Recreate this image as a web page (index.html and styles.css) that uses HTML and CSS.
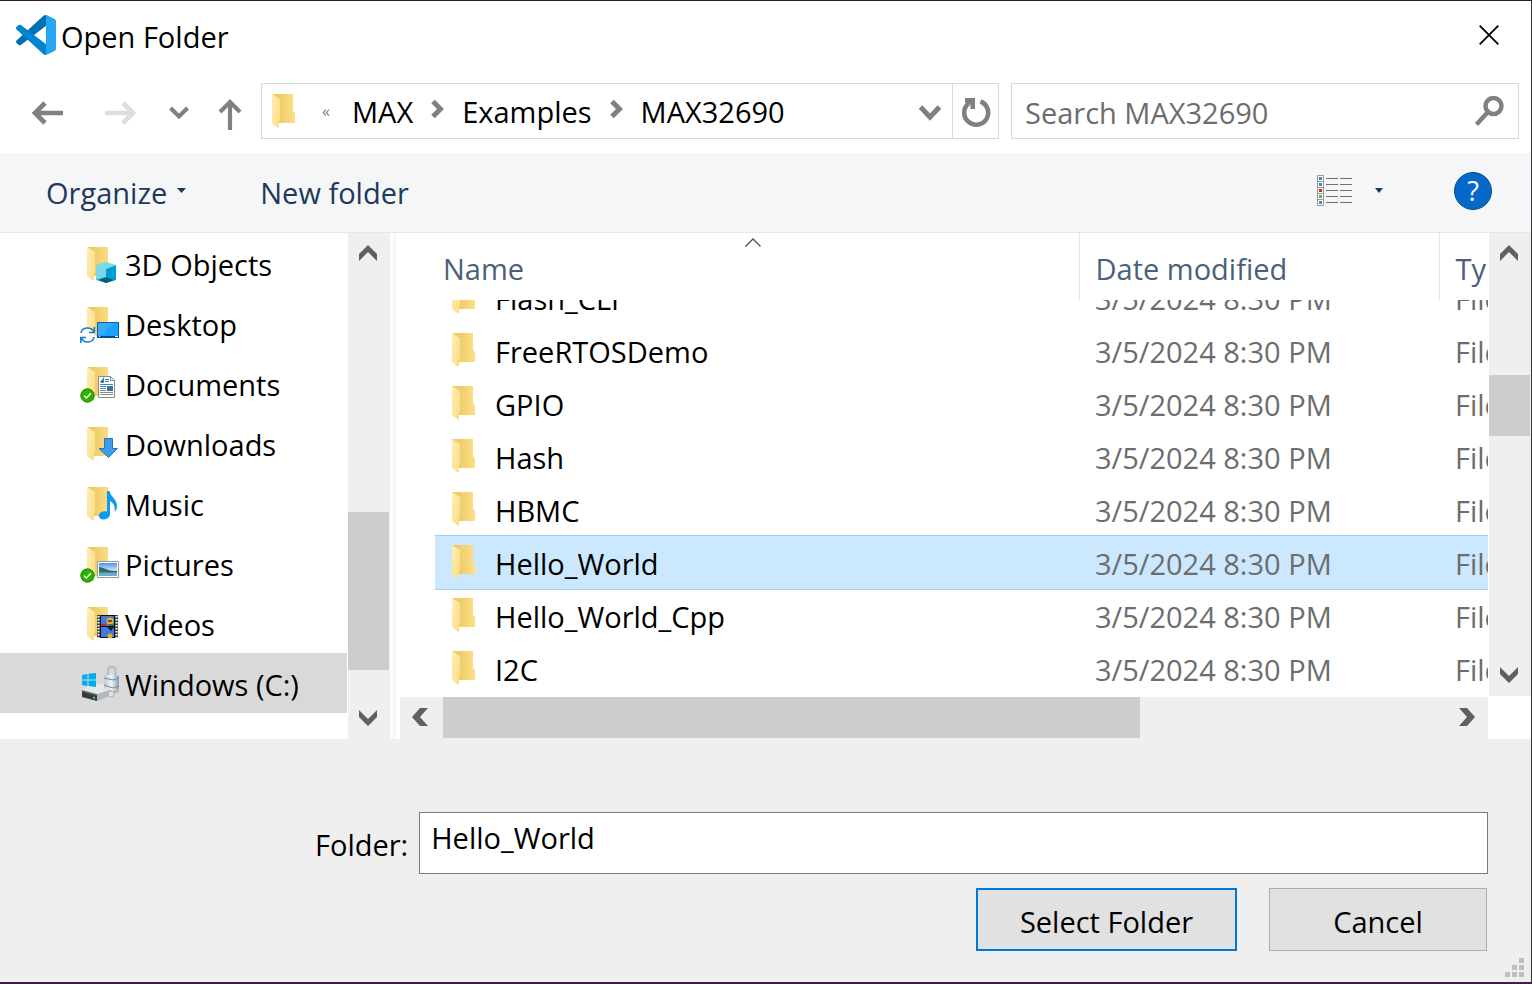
FILE: index.html
```html
<!DOCTYPE html>
<html lang="en">
<head>
<meta charset="utf-8">
<title>Open Folder</title>
<link rel="stylesheet" href="styles.css">
</head>
<body>
<svg class="defs" aria-hidden="true">
  <defs>
    <linearGradient id="back" x1="0" y1="0" x2="1" y2="0"><stop offset=".3" stop-color="#efca69"/><stop offset="1" stop-color="#fde085"/></linearGradient>
    <linearGradient id="flap" x1="0" y1="0" x2="1" y2="1"><stop offset="0" stop-color="#ffeeb5"/><stop offset="1" stop-color="#fbdc83"/></linearGradient>
    <linearGradient id="sky" x1="0" y1="0" x2="0" y2="1"><stop offset="0" stop-color="#4f93ea"/><stop offset="1" stop-color="#e8f4fb"/></linearGradient>
    <linearGradient id="metal" x1="0" y1="0" x2="1" y2="0"><stop offset="0" stop-color="#c3cad0"/><stop offset=".5" stop-color="#eef2f5"/><stop offset="1" stop-color="#8e9aa5"/></linearGradient>
    <symbol id="folder" viewBox="0 0 24 35">
      <path fill="url(#back)" d="M0 0H21V17L23 19V29H6Z"/>
      <path fill="url(#flap)" d="M0 0L8 5V25L7 27V34L5 33L0 29Z"/>
    </symbol>
    <symbol id="check" viewBox="0 0 16 16">
      <circle cx="8" cy="8" r="7.5" fill="#2db200"/><circle cx="8" cy="8" r="7" fill="none" stroke="#189000"/>
      <path fill="none" stroke="#fff" stroke-width="1.6" d="M4.3 8.2L6.8 10.6L11.6 5.6"/>
    </symbol>
    <symbol id="up" viewBox="0 0 18 16"><path fill="#606060" d="M9 0L18 9V16L9 7L0 16V9Z"/></symbol>
    <symbol id="down" viewBox="0 0 18 16"><path fill="#606060" d="M9 16L18 7V0L9 9L0 0V7Z"/></symbol>
    <symbol id="left" viewBox="0 0 16 18"><path fill="#606060" d="M0 9L8 0H16L8 9L16 18H8Z"/></symbol>
    <symbol id="right" viewBox="0 0 16 18"><path fill="#606060" d="M16 9L8 0H0L8 9L0 18H8Z"/></symbol>
    <symbol id="crumb" viewBox="0 0 13 18"><path fill="none" stroke="#808080" stroke-width="5" d="M2 1.5L9.5 9L2 16.5"/></symbol>
  </defs>
</svg>
<div class="dialog" role="dialog" aria-labelledby="dialog-title">
  <header class="titlebar">
    <svg class="logo" width="40" height="40" viewBox="0 0 100 100" aria-hidden="true">
      <path fill="#0070b3" d="M96.4614 10.7962L75.8569 .8755C73.4719-.2728 70.6217.2116 68.75 2.0833L1.2986 63.5832C-.5157 65.2373-.5136 68.0937 1.3031 69.7452L6.8127 74.754C8.2979 76.1042 10.5347 76.2036 12.1338 74.9905L93.3609 13.3699C96.086 11.3026 100 13.2462 100 16.6667V16.4275C100 14.0265 98.6246 11.8378 96.4614 10.7962Z"/>
      <path fill="#0086d1" d="M96.4614 89.2038L75.8569 99.1245C73.4719 100.273 70.6217 99.7884 68.75 97.9167L1.2986 36.4169C-.5157 34.7627-.5136 31.9063 1.3031 30.2548L6.8127 25.246C8.2979 23.8958 10.5347 23.7964 12.1338 25.0095L93.3609 86.6301C96.086 88.6974 100 86.7538 100 83.3334V83.5726C100 85.9735 98.6246 88.1622 96.4614 89.2038Z"/>
      <path fill="#26a5f2" d="M75.8578 99.1263C73.4721 100.274 70.6219 99.7885 68.75 97.9166C71.0564 100.223 75 98.5895 75 95.3278V4.6721C75 1.4104 71.0564-.2231 68.75 2.0833C70.6219.2114 73.4721-.2737 75.8578.8736L96.4587 10.7807C98.6234 11.8217 100 14.0112 100 16.4132V83.5871C100 85.9893 98.6234 88.1787 96.4587 89.2198L75.8578 99.1263Z"/>
    </svg>
    <h1 class="title" id="dialog-title">Open Folder</h1>
    <button class="plain close" type="button" aria-label="Close"><svg width="20" height="20" viewBox="0 0 20 20"><path fill="none" stroke="#000" stroke-width="1.8" d="M.7.7L19.3 19.3M19.3.7L.7 19.3"/></svg></button>
  </header>

  <nav class="navbar" aria-label="Location">
    <div class="history">
      <button class="plain" type="button" aria-label="Back"><svg width="31" height="24" viewBox="0 0 31 24"><path fill="none" stroke="#808080" stroke-width="4.6" d="M31 12H3M13 2L3 12L13 22"/></svg></button>
      <button class="plain forward" type="button" aria-label="Forward"><svg width="31" height="24" viewBox="0 0 31 24"><path fill="none" stroke="#dedede" stroke-width="4.6" d="M0 12H28M18 2L28 12L18 22"/></svg></button>
      <button class="plain recent" type="button" aria-label="Recent locations"><svg width="20" height="14" viewBox="0 0 20 14"><path fill="none" stroke="#808080" stroke-width="4" d="M1.5 2L10 10.5L18.500 2"/></svg></button>
      <button class="plain parent" type="button" aria-label="Up"><svg width="24" height="32" viewBox="0 0 24 32"><path fill="none" stroke="#808080" stroke-width="4.2" d="M12 31V3M2 13L12 3L22 13"/></svg></button>
    </div>
    <div class="address">
      <svg class="address-folder" width="24" height="35" aria-hidden="true"><use href="#folder"/></svg>
      <button class="plain overflow" type="button" aria-label="More folders">«</button>
      <button class="plain crumb" type="button">MAX</button>
      <svg class="crumb-arrow" width="13" height="18" aria-hidden="true"><use href="#crumb"/></svg>
      <button class="plain crumb" type="button">Examples</button>
      <svg class="crumb-arrow" width="13" height="18" aria-hidden="true"><use href="#crumb"/></svg>
      <button class="plain crumb" type="button">MAX32690</button>
      <button class="plain previous" type="button" aria-label="Previous locations"><svg width="22" height="16" viewBox="0 0 22 16"><path fill="none" stroke="#808080" stroke-width="5" d="M1.500 2L11 12L20.500 2"/></svg></button>
      <button class="plain refresh" type="button" aria-label="Refresh"><svg width="30" height="32" viewBox="0 0 30 32"><path fill="none" stroke="#808080" stroke-width="4.600" d="M7.500 7.500A12 12 0 1 0 19.500 5.500"/><path fill="#808080" d="M4 2H14V13H9.500V9L4 6.500Z"/></svg></button>
    </div>
    <div class="search">
      <input class="search-input" type="search" placeholder="Search MAX32690" aria-label="Search MAX32690">
      <svg width="30" height="32" viewBox="0 0 30 32" aria-hidden="true"><circle cx="18.500" cy="11" r="8" fill="none" stroke="#808080" stroke-width="4.500"/><path stroke="#808080" stroke-width="4.500" d="M13 17L1.500 29.500"/></svg>
    </div>
  </nav>

  <div class="toolbar" role="toolbar" aria-label="Folder actions">
    <button class="plain tool organize" type="button">Organize<svg width="10" height="5" viewBox="0 0 10 5" aria-hidden="true"><path fill="#1e395b" d="M0 0H9L4.500 5Z"/></svg></button>
    <button class="plain tool" type="button">New folder</button>
    <button class="plain view" type="button" aria-label="Change your view">
      <svg width="36" height="32" viewBox="0 0 36 32"><g fill="#fff" stroke="#999"><path d="M.5.5H6.500V30.500H.5ZM.5 6.500H6.500M.5 12.500H6.500M.5 18.500H6.500M.5 24.500H6.500"/></g><path stroke="#707070" d="M9 3.500H21M23 3.500H35M9 9.500H21M23 9.500H35M9 15.500H21M23 15.500H35M9 21.500H21M23 21.500H35M9 27.500H21M23 27.500H35"/><path fill="#4b88b8" d="M2 2H5V5H2ZM2 8H5V11H2ZM2 26H5V29H2Z"/><path fill="#d02a10" d="M2 14H5V17H2Z"/><path fill="#7aa06a" d="M2 20H5V23H2Z"/></svg>
      <svg width="8" height="5" viewBox="0 0 8 5"><path fill="#1e395b" d="M0 0H8L4 5Z"/></svg>
    </button>
    <button class="plain help" type="button" aria-label="Get help">?</button>
  </div>

  <main class="browser">
    <ul class="places">
      <li><button class="plain place" type="button"><svg width="40" height="40" viewBox="0 0 40 40" aria-hidden="true"><use href="#folder" x="7" y="4" width="24" height="35"/><path fill="#74dcea" d="M16 22L26 19L36 22L26 26Z"/><path fill="#48c3dc" d="M16 22L26 26V40L16 37Z"/><path fill="#009fd3" d="M36 22L26 26V40L36 37Z"/><path fill="#035e78" d="M18 37L26 34L34 37L26 40Z"/><path fill="#b8f0f5" d="M16 22L26 26V34L16 36Z" opacity=".45"/></svg>3D Objects</button></li>
      <li><button class="plain place" type="button"><svg width="40" height="40" viewBox="0 0 40 40" aria-hidden="true"><use href="#folder" x="7" y="4" width="24" height="35"/><path fill="#1ba1ff" stroke="#0a5fa8" d="M17.500 19.500H38.500V34.500H17.500Z"/><path fill="#52b7ff" d="M18 20H33L22 32H18Z" opacity=".5"/><path stroke="#084f8c" stroke-width="2" d="M17 34H39"/><path stroke="#d9efff" d="M19 33.500H20M35 33.500H38"/><circle cx="7.500" cy="32" r="8" fill="#fff" opacity=".75"/><path fill="none" stroke="#0f7ad6" stroke-width="1.500" d="M1 30C2 24 11 23 14 29M14.300 24V29.500H9M14 34C13 40 4 41 1.500 35M.8 40V34.500H6"/></svg>Desktop</button></li>
      <li><button class="plain place" type="button"><svg width="40" height="40" viewBox="0 0 40 40" aria-hidden="true"><use href="#folder" x="7" y="4" width="24" height="35"/><path fill="#fff" stroke="#8c8c8c" d="M18.500 13.500H30.500L34.500 17.500V34.500H18.500Z"/><path fill="none" stroke="#8c8c8c" d="M30.500 13.500V17.500H34.500"/><path stroke="#2f8bc4" stroke-width="1.200" d="M20.500 19.500L23.500 15.500V19.500M25 16.500H29M25 18.500H29M20 21.500H33M20 23.500H26"/><path stroke="#888" d="M20 25.500H26M20 27.500H26M20 29.500H33M20 31.500H33"/><path fill="#3d729c" d="M27 23H33V28H27Z"/><use href="#check" x="0" y="25" width="15" height="15"/></svg>Documents</button></li>
      <li><button class="plain place" type="button"><svg width="40" height="40" viewBox="0 0 40 40" aria-hidden="true"><use href="#folder" x="7" y="4" width="24" height="35"/><path fill="#3d9bea" stroke="#2474bd" d="M24.500 15.500H32.500V25.500H37.500L28.500 34.500L19 25.500H24.500Z"/></svg>Downloads</button></li>
      <li><button class="plain place" type="button"><svg width="40" height="40" viewBox="0 0 40 40" aria-hidden="true"><use href="#folder" x="7" y="4" width="24" height="35"/><path fill="#0a9bf5" d="M27 8H29.500C30.500 14 37 16 37 23C37 26 36 28 34.500 29C35.500 24 34 20 30 18V31C30 34 27 36.500 23.500 36.500C20.500 36.500 18.500 34.500 19 32C19.500 29.500 23 27.500 27 28.500Z"/></svg>Music</button></li>
      <li><button class="plain place" type="button"><svg width="40" height="40" viewBox="0 0 40 40" aria-hidden="true"><use href="#folder" x="7" y="4" width="24" height="35"/><path fill="#fff" stroke="#999" d="M17.500 18.500H38.500V34.500H17.500Z"/><path fill="url(#sky)" d="M19 20H37V29H19Z"/><path fill="#28706b" d="M19 24C24 24 26 28 37 28V30H19Z"/><path fill="#6ea9ce" d="M19 29.500H37V33H19Z"/><use href="#check" x="0" y="25" width="15" height="15"/></svg>Pictures</button></li>
      <li><button class="plain place" type="button"><svg width="40" height="40" viewBox="0 0 40 40" aria-hidden="true"><use href="#folder" x="7" y="4" width="24" height="35"/><path fill="#444" d="M17 12H38V35H17Z"/><path stroke="#fff" stroke-width="2" stroke-dasharray="1.500 1.500" d="M18.500 13V35M36.500 13V35"/><path fill="#4478dc" stroke="#111" d="M20.500 12.500H34.500V23.500H20.500ZM20.500 23.500H34.500V34.500H20.500Z"/><circle cx="30" cy="18" r="3.500" fill="#d7b72a"/><path fill="#b02d3b" d="M21 21H26V23H21ZM28 17H32V19H28Z"/><path fill="#17202a" d="M27 24H34L31 28Z"/><circle cx="30" cy="33" r="2.500" fill="#d7b72a"/><path fill="#3a7b3d" d="M29 21H34V23H29Z"/></svg>Videos</button></li>
      <li><button class="plain place is-current" type="button" aria-current="true"><svg width="40" height="40" viewBox="0 0 40 40" aria-hidden="true"><path fill="#e6e8ea" d="M2 27L12 21H30L38 26L17 32Z"/><path fill="#b4b9be" d="M17 31L39 24V29L17 38Z"/><path fill="#373a3d" d="M2 28L17 32V38L2 34Z"/><path fill="#6f7376" d="M2 27L17 31V32.500L2 28.500Z"/><path fill="#3ee03a" d="M13 33.500L15 34V36L13 35.500Z"/><path fill="#00adef" d="M2 12L7.500 11V16.500H2ZM8.500 10.800L16 10V16.500H8.500ZM2 17.500H7.500V23L2 22ZM8.500 17.500H16V24L8.500 23Z"/><path fill="none" stroke="#b9bfc4" stroke-width="2.500" d="M28 13V7C28 2.500 35 2.500 35.500 7V13"/><path fill="url(#metal)" d="M24 13L32 11L39 13V26L33 28L24 25Z"/><path fill="none" stroke="#5f93b5" d="M24 15L33 17L39 15M24 22L33 25L39 23"/><circle cx="31" cy="31" r="3" fill="#dfe3e6" stroke="#aeb4b8"/></svg>Windows (C:)</button></li>
    </ul>
    <div class="vscroll places-scroll">
      <button class="plain scroll-button" type="button" aria-label="Scroll up"><svg width="18" height="16"><use href="#up"/></svg></button>
      <div class="track"><div class="thumb"></div></div>
      <button class="plain scroll-button" type="button" aria-label="Scroll down"><svg width="18" height="16"><use href="#down"/></svg></button>
    </div>
    <div class="splitter"></div>
    <section class="files" aria-label="Files">
      <div class="pane">
        <table class="grid head">
          <colgroup><col class="col-name"><col class="col-date"><col class="col-type"></colgroup>
          <thead><tr>
            <th scope="col" aria-sort="ascending">Name<svg class="sort" width="16" height="9" viewBox="0 0 16 9" aria-hidden="true"><path fill="none" stroke="#505050" stroke-width="1.300" d="M.5 8.500L8 1L15.500 8.500"/></svg></th>
            <th scope="col">Date modified</th><th scope="col">Type</th>
          </tr></thead>
        </table>
        <div class="rows">
          <table class="grid body" aria-label="Folders">
            <colgroup><col class="col-name"><col class="col-date"><col class="col-type"></colgroup>
            <tbody>
              <tr><td><span class="file"><svg width="24" height="35"><use href="#folder"/></svg>Flash_CLI</span></td><td>3/5/2024 8:30 PM</td><td>File folder</td></tr>
              <tr><td><span class="file"><svg width="24" height="35"><use href="#folder"/></svg>FreeRTOSDemo</span></td><td>3/5/2024 8:30 PM</td><td>File folder</td></tr>
              <tr><td><span class="file"><svg width="24" height="35"><use href="#folder"/></svg>GPIO</span></td><td>3/5/2024 8:30 PM</td><td>File folder</td></tr>
              <tr><td><span class="file"><svg width="24" height="35"><use href="#folder"/></svg>Hash</span></td><td>3/5/2024 8:30 PM</td><td>File folder</td></tr>
              <tr><td><span class="file"><svg width="24" height="35"><use href="#folder"/></svg>HBMC</span></td><td>3/5/2024 8:30 PM</td><td>File folder</td></tr>
              <tr class="is-selected"><td><span class="file"><svg width="24" height="35"><use href="#folder"/></svg>Hello_World</span></td><td>3/5/2024 8:30 PM</td><td>File folder</td></tr>
              <tr><td><span class="file"><svg width="24" height="35"><use href="#folder"/></svg>Hello_World_Cpp</span></td><td>3/5/2024 8:30 PM</td><td>File folder</td></tr>
              <tr><td><span class="file"><svg width="24" height="35"><use href="#folder"/></svg>I2C</span></td><td>3/5/2024 8:30 PM</td><td>File folder</td></tr>
            </tbody>
          </table>
        </div>
      </div>
      <div class="vscroll files-scroll">
        <button class="plain scroll-button" type="button" aria-label="Scroll up"><svg width="18" height="16"><use href="#up"/></svg></button>
        <div class="track"><div class="thumb"></div></div>
        <button class="plain scroll-button" type="button" aria-label="Scroll down"><svg width="18" height="16"><use href="#down"/></svg></button>
      </div>
      <div class="hscroll">
        <button class="plain scroll-button" type="button" aria-label="Scroll left"><svg width="16" height="18"><use href="#left"/></svg></button>
        <div class="track"><div class="thumb"></div></div>
        <button class="plain scroll-button" type="button" aria-label="Scroll right"><svg width="16" height="18"><use href="#right"/></svg></button>
      </div>
    </section>
  </main>

  <footer class="footer">
    <div class="folder-row">
      <label class="folder-label" for="folder">Folder:</label>
      <input class="folder-input" id="folder" type="text" value="Hello_World">
    </div>
    <div class="actions">
      <button class="action is-default" type="button">Select Folder</button>
      <button class="action cancel" type="button">Cancel</button>
    </div>
    <svg class="grip" width="20" height="20" viewBox="0 0 20 20" aria-hidden="true"><path fill="#bfbfbf" d="M14 0H19V5H14ZM7 7H12V12H7ZM14 7H19V12H14ZM0 14H5V19H0ZM7 14H12V19H7ZM14 14H19V19H14Z"/></svg>
  </footer>
</div>
</body>
</html>
```

FILE: styles.css
```css
* { box-sizing: border-box; }

body {
  margin: 0;
  background: #fff;
  color: #000;
  font: 29px/36px "Open Sans", "Noto Sans", sans-serif;
}

svg { display: block; flex: none; }
.defs { position: absolute; width: 0; height: 0; }

.plain {
  display: flex;
  align-items: center;
  padding: 0;
  border: 0;
  background: none;
  color: inherit;
  font: inherit;
}

.dialog {
  display: flex;
  flex-direction: column;
  height: 100vh;
  overflow: hidden;
  border-top: 1px solid #26232a;
  border-right: 1px solid #33343a;
  border-bottom: 2px solid #3c1f42;
}

/* Title bar */
.titlebar {
  display: flex;
  align-items: center;
  gap: 5px;
  height: 68px;
  padding: 0 32px 0 16px;
}
.title { margin: 0; padding-top: 4px; font-size: 29px; font-weight: 400; }
.close { margin-left: auto; }

/* Navigation */
.navbar {
  display: flex;
  align-items: center;
  height: 84px;
  padding: 0 12px 0 32px;
}
.history { display: flex; align-items: center; width: 229px; padding-top: 4px; }
.forward { margin-left: 42px; }
.recent { margin-left: 33px; }
.parent { margin-left: 29px; padding-top: 4px; }
.address, .search {
  display: flex;
  align-items: center;
  height: 56px;
  border: 1px solid #d9d9d9;
}
.address { flex: 726 1 0; margin-right: 12px; padding-left: 10px; }
.address-folder { margin-right: 26px; }
.overflow { width: 30px; color: #808080; font-size: 16px; }
.crumb { height: 54px; padding-top: 2px; }
.crumb-arrow { margin: 0 18px 4px; }
.previous { margin-left: auto; margin-right: 11px; padding-top: 4px; }
.refresh { justify-content: center; width: 46px; height: 54px; padding-top: 2px; border-left: 1px solid #d9d9d9; }
.search { flex: 480 1 0; padding: 0 13px; }
.search-input {
  flex: 1;
  min-width: 0;
  height: 54px;
  padding: 2px 0 0;
  border: 0;
  outline: 0;
  background: none;
  font: inherit;
}
.search-input::placeholder { color: #6d6d6d; opacity: 1; }

/* Toolbar */
.toolbar {
  display: flex;
  align-items: center;
  height: 80px;
  padding: 0 39px 4px 46px;
  border-bottom: 1px solid #e5e7ea;
  background: #f4f6f8;
  color: #1e395b;
}
.tool { padding-top: 5px; }
.organize { gap: 10px; margin-right: 73px; }
.organize svg { margin-bottom: 5px; }
.view { gap: 22px; margin-left: auto; }
.help {
  justify-content: center;
  width: 38px;
  height: 38px;
  margin-left: 71px;
  border: 1px solid #0b4a86;
  border-radius: 50%;
  background: #0569c9;
  color: #fff;
  font-size: 27px;
}

/* Places and files */
.browser { display: flex; flex: 1; min-height: 0; }
.places {
  width: 347px;
  margin: 0 1px 0 0;
  padding: 0;
  overflow: hidden;
  list-style: none;
}
.place { gap: 5px; width: 100%; height: 60px; padding: 4px 0 0 80px; }
.place svg { margin-bottom: 4px; }
.is-current { background: #d9d9d9; }

.vscroll, .hscroll { display: flex; background: #efefef; }
.vscroll { flex-direction: column; width: 42px; }
.scroll-button { justify-content: center; flex: none; }
.vscroll .scroll-button { height: 41px; padding: 0 2px 2px 0; }
.hscroll .scroll-button { width: 43px; padding-bottom: 2px; }
.hscroll .scroll-button:first-child { padding-right: 4px; }
.track { display: flex; flex: 1; }
.vscroll .track { flex-direction: column; }
.track::before, .track::after { content: ""; }
.thumb { background: #cdcdcd; }
.vscroll .thumb { margin-right: 1px; }
.hscroll .thumb { flex: 697; margin-bottom: 1px; }
.hscroll .track::after { flex: 305; }
.places-scroll .track::before { flex: 238; }
.places-scroll .thumb { flex: 158; }
.places-scroll .track::after { flex: 28; }
.files-scroll { margin-bottom: 1px; }
.files-scroll .track::before { flex: 101; }
.files-scroll .thumb { flex: 61; }
.files-scroll .track::after { flex: 219; }
.splitter { width: 6px; margin-right: 4px; border-left: 3px solid #fff; border-right: 3px solid #f6f6f6; }

.files {
  display: grid;
  flex: 1;
  grid-template: minmax(0, 1fr) 42px / minmax(0, 1fr) 42px;
  min-width: 0;
}
.hscroll { margin-right: 1px; }
.pane { display: flex; flex-direction: column; margin-right: 1px; padding-left: 35px; overflow: hidden; }
.rows { flex: 1; min-height: 0; overflow: hidden; }
.grid { width: 1245px; border-collapse: collapse; table-layout: fixed; }
.col-name { width: 644px; }
.col-date { width: 360px; }
.grid th, .grid td { padding: 0 0 0 16px; text-align: left; font-weight: 400; white-space: nowrap; }
.head th {
  position: relative;
  height: 67px;
  padding-top: 5px;
  border-left: 1px solid #e5e5e5;
  color: #4c607a;
}
.head th:first-child { padding-left: 8px; border-left: 0; }
.sort { position: absolute; top: 5px; left: 310px; }
/* The list is scrolled part-way through its first row. */
.body { margin-top: -29px; }
.body td { height: 53px; padding-top: 3px; color: #6d6d6d; }
.body td:first-child { padding-left: 17px; color: #000; }
.file { display: flex; align-items: center; gap: 19px; }
.file svg { margin-top: -3px; }
.is-selected { outline: 1px solid #99d1ff; background: #cce8ff; }

/* Footer */
.footer { position: relative; padding: 73px 43px 31px 0; background: #efefef; }
.folder-row { display: flex; align-items: center; gap: 11px; padding-left: 315px; }
.folder-label { padding-top: 4px; }
.folder-input {
  flex: 1;
  min-width: 0;
  height: 62px;
  padding: 0 11px 12px;
  border: 1px solid #7a7a7a;
  border-radius: 0;
  background: #fff;
  color: #000;
  font: inherit;
}
.actions { display: flex; justify-content: flex-end; gap: 32px; margin: 14px 1px 0 0; }
.action {
  width: 218px;
  height: 63px;
  padding: 4px 0 0;
  border: 1px solid #adadad;
  background: #e1e1e1;
  color: #000;
  font: inherit;
}
.is-default { width: 261px; border: 2px solid #0078d7; }
.grip { position: absolute; right: 6px; bottom: 4px; }
```
